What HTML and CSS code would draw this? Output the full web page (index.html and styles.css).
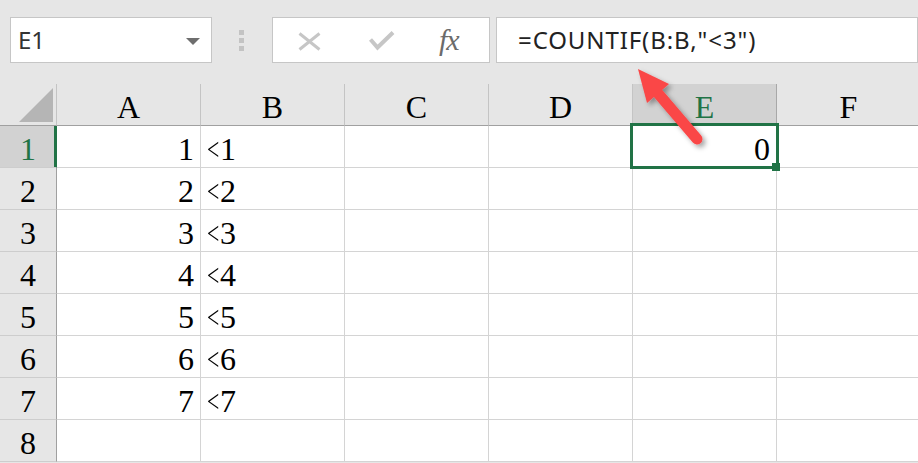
FILE: index.html
```html
<!DOCTYPE html>
<html>
<head>
<meta charset="utf-8">
<link rel="stylesheet" href="styles.css">
</head>
<body>
<div class="toolbar">
  <div class="namebox"><span class="name">E1</span><span class="caret"></span></div>
  <div class="grip"><i></i><i></i><i></i></div>
  <div class="buttons">
    <svg class="ic-x" width="23" height="19" viewBox="0 0 23 19"><path d="M1.5 1.5 L21.5 17.5 M21.5 1.5 L1.5 17.5" stroke="#c6c6c6" stroke-width="3" fill="none"/></svg>
    <svg class="ic-check" width="26" height="20" viewBox="0 0 26 20"><path d="M1.5 8.5 L8.5 16.5 L24 1.5" stroke="#c6c6c6" stroke-width="4" fill="none"/></svg>
    <span class="fx">fx</span>
  </div>
  <div class="formula">=COUNTIF(B:B,"&lt;3")</div>
</div>
<div class="sheet">
  <div class="corner"><svg width="34" height="34" viewBox="0 0 34 34"><polygon points="34,0 34,34 0,34" fill="#b5b5b5"/></svg></div>
  <div class="ch">A</div><div class="ch">B</div><div class="ch">C</div><div class="ch">D</div><div class="ch sel">E</div><div class="ch">F</div>

  <div class="rh sel">1</div><div class="c num">1</div><div class="c txt"><span class="lt">&lt;</span>1</div><div class="c"></div><div class="c"></div><div class="c num">0</div><div class="c"></div>
  <div class="rh">2</div><div class="c num">2</div><div class="c txt"><span class="lt">&lt;</span>2</div><div class="c"></div><div class="c"></div><div class="c"></div><div class="c"></div>
  <div class="rh">3</div><div class="c num">3</div><div class="c txt"><span class="lt">&lt;</span>3</div><div class="c"></div><div class="c"></div><div class="c"></div><div class="c"></div>
  <div class="rh">4</div><div class="c num">4</div><div class="c txt"><span class="lt">&lt;</span>4</div><div class="c"></div><div class="c"></div><div class="c"></div><div class="c"></div>
  <div class="rh">5</div><div class="c num">5</div><div class="c txt"><span class="lt">&lt;</span>5</div><div class="c"></div><div class="c"></div><div class="c"></div><div class="c"></div>
  <div class="rh">6</div><div class="c num">6</div><div class="c txt"><span class="lt">&lt;</span>6</div><div class="c"></div><div class="c"></div><div class="c"></div><div class="c"></div>
  <div class="rh">7</div><div class="c num">7</div><div class="c txt"><span class="lt">&lt;</span>7</div><div class="c"></div><div class="c"></div><div class="c"></div><div class="c"></div>
  <div class="rh">8</div><div class="c"></div><div class="c"></div><div class="c"></div><div class="c"></div><div class="c"></div><div class="c"></div>
</div>
<div class="selection"><span class="handle"></span></div>
<svg class="arrow" width="918" height="463" viewBox="0 0 918 463">
  <defs>
    <filter id="sh" x="-50%" y="-50%" width="200%" height="200%">
      <feDropShadow dx="3" dy="3" stdDeviation="2.5" flood-color="#000" flood-opacity="0.35"/>
    </filter>
  </defs>
  <g filter="url(#sh)">
    <line x1="656" y1="91" x2="697" y2="139" stroke="#fa4747" stroke-width="11" stroke-linecap="round"/>
    <polygon points="638,69 669,84 647,103" fill="#fa4747"/>
  </g>
</svg>
</body>
</html>
```
FILE: styles.css
```css
html, body {
  margin: 0;
  padding: 0;
}
body {
  width: 918px;
  height: 463px;
  overflow: hidden;
  background: #e6e6e6;
  position: relative;
}
.toolbar {
  height: 84px;
  box-sizing: border-box;
  padding: 17px 0 0 10px;
  display: flex;
  align-items: flex-start;
  font-family: "Noto Sans", sans-serif;
}
.namebox {
  width: 202px;
  height: 46px;
  box-sizing: border-box;
  background: #fff;
  border: 1px solid #c6c6c6;
  display: flex;
  align-items: center;
  padding-left: 7px;
}
.name {
  font-size: 24px;
  line-height: 44px;
  color: #333;
  flex: 1;
}
.caret {
  width: 0;
  height: 0;
  border-left: 7px solid transparent;
  border-right: 7px solid transparent;
  border-top: 7px solid #6e6e6e;
  margin-right: 11px;
  margin-top: 2px;
}
.grip {
  margin-left: 27px;
  width: 5px;
  padding-top: 13px;
  display: flex;
  flex-direction: column;
  gap: 3px;
}
.grip i {
  display: block;
  width: 5px;
  height: 5px;
  background: #c3c3c3;
}
.buttons {
  margin-left: 28px;
  width: 218px;
  height: 46px;
  box-sizing: border-box;
  background: #fff;
  border: 1px solid #c6c6c6;
  display: flex;
  align-items: center;
  padding-left: 25px;
}
.ic-x {
  display: block;
  margin-top: 3px;
}
.ic-check {
  display: block;
  margin-left: 48px;
  margin-top: 2px;
}
.fx {
  margin-left: 44px;
  font-family: "Liberation Serif", serif;
  font-style: italic;
  font-size: 30px;
  color: #6b6b6b;
  line-height: 44px;
  letter-spacing: -1px;
}
.formula {
  margin-left: 6px;
  width: 422px;
  height: 46px;
  box-sizing: border-box;
  background: #fff;
  border: 1px solid #c6c6c6;
  padding-left: 21px;
  font-size: 24px;
  letter-spacing: 0.9px;
  line-height: 44px;
  color: #222;
  white-space: nowrap;
}
.sheet {
  display: grid;
  grid-template-columns: 57px repeat(6, 144px);
  grid-auto-rows: 42px;
  font-family: "Liberation Serif", "Times New Roman", serif;
  font-size: 32px;
  color: #000;
  background: #fff;
  width: 918px;
  overflow: hidden;
}
.corner {
  background: #e6e6e6;
  border-right: 1px solid #c4c4c4;
  border-bottom: 1px solid #a0a0a0;
  box-sizing: border-box;
  display: flex;
  justify-content: flex-end;
  align-items: flex-end;
  padding: 0 3px 3px 0;
}
.corner svg {
  display: block;
}
.ch {
  background: #e6e6e6;
  border-right: 1px solid #c4c4c4;
  border-bottom: 1px solid #a0a0a0;
  box-sizing: border-box;
  text-align: center;
  line-height: 46px;
  height: 42px;
}
.ch.sel {
  background: #d2d2d2;
  color: #217346;
  border-right-color: #a8a8a8;
}
.rh {
  background: #e6e6e6;
  border-right: 1px solid #a0a0a0;
  border-bottom: 1px solid #cdcdcd;
  box-sizing: border-box;
  text-align: center;
  line-height: 46px;
  height: 42px;
}
.rh.sel {
  background: #d2d2d2;
  color: #217346;
  border-right-color: #217346;
  box-shadow: inset -2px 0 0 #217346;
}
.c {
  border-right: 1px solid #d4d4d4;
  border-bottom: 1px solid #d4d4d4;
  box-sizing: border-box;
  height: 42px;
  line-height: 46px;
  white-space: nowrap;
}
.num {
  text-align: right;
  padding-right: 6px;
}
.txt {
  padding-left: 6px;
}
.lt {
  display: inline-block;
  transform: scaleX(0.68);
  transform-origin: left center;
  width: 13px;
}
.selection {
  position: absolute;
  left: 630px;
  top: 123px;
  width: 149px;
  height: 46px;
  box-sizing: border-box;
  border: 3px solid #217346;
}
.handle {
  position: absolute;
  left: 139px;
  top: 37px;
  width: 8px;
  height: 8px;
  background: #217346;
}
.arrow {
  position: absolute;
  left: 0;
  top: 0;
  pointer-events: none;
}
```
